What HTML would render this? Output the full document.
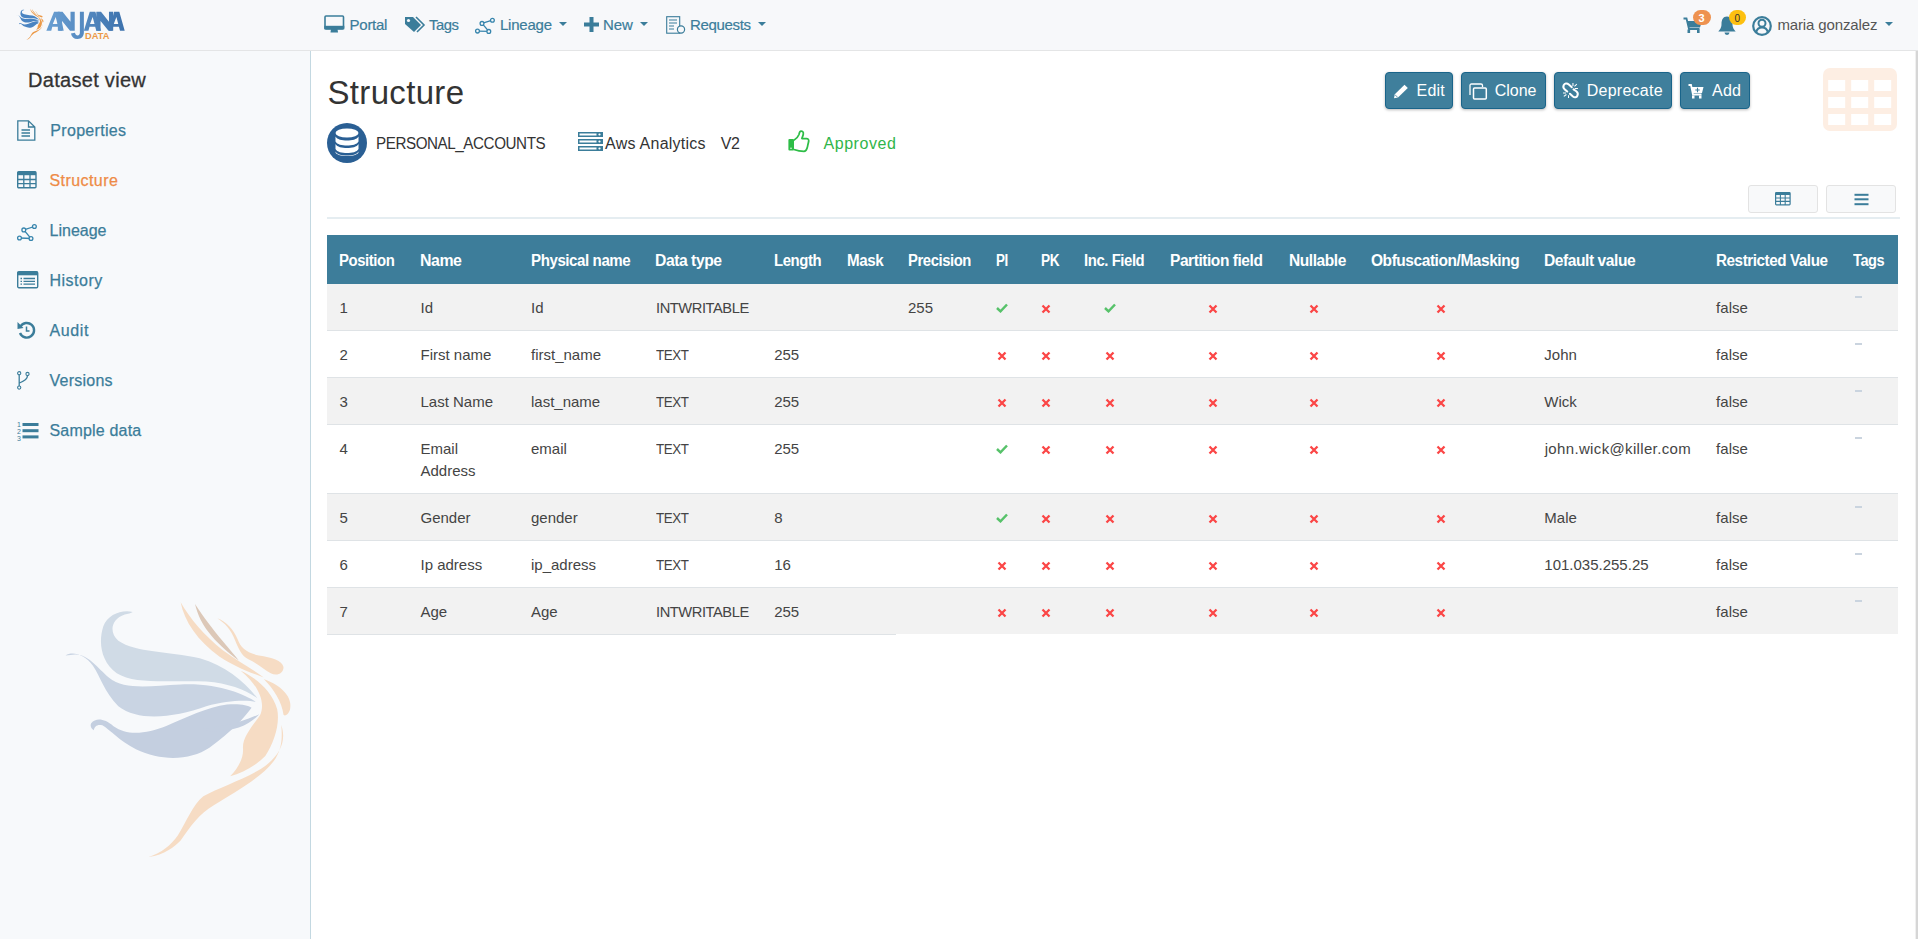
<!DOCTYPE html><html><head><meta charset="utf-8"><style>
html,body{margin:0;padding:0;width:1918px;height:939px;overflow:hidden;background:#fff;position:relative}
.t{position:absolute;white-space:nowrap;line-height:1;font-family:"Liberation Sans",sans-serif}
svg{display:block}
</style></head><body>
<div style="position:absolute;left:0;top:0;width:1918px;height:50px;background:#f7f8fa;border-bottom:1px solid #e4e5e6"></div>
<svg style="position:absolute;left:13.3px;top:5.6px" width="34.1" height="36.5" viewBox="0 0 876 939"><path d="M290 100 C255 92 212 108 198 145 C182 195 190 255 240 292 C300 330 420 312 520 318 C590 323 645 345 680 370 C640 318 580 268 500 245 C400 222 300 228 245 190 C215 165 222 122 265 108 C275 106 285 104 290 100 Z" fill="#4a84c2"/><path d="M80 236 C100 222 140 232 165 268 C190 305 200 350 245 395 C310 445 420 430 520 395 C590 375 650 375 676 382 C640 358 560 322 440 327 C340 332 265 345 215 305 C180 275 150 232 110 233 C100 234 90 236 80 236 Z" fill="#4a84c2"/><path d="M160 448 C175 432 200 432 230 458 C275 490 335 480 395 457 C455 432 525 397 585 390 C625 387 650 392 662 400 C640 430 600 475 530 525 C470 565 380 568 300 530 C250 505 220 470 195 455 C180 450 170 458 168 470 C160 465 156 455 160 448 Z" fill="#4a84c2"/><path d="M510 466 C560 460 620 450 686 420 C660 450 610 475 540 474 C525 474 515 470 510 466 Z" fill="#4a84c2"/><path d="M440 70 C452 130 492 190 562 240 C605 268 645 285 700 305 C655 272 612 250 572 220 C512 172 470 122 440 70 Z" fill="#ec9a48"/><path d="M485 75 C500 140 542 192 622 252 C592 212 540 160 485 75 Z" fill="#ec9a48"/><path d="M555 120 C585 132 605 155 618 185 C628 212 645 228 685 236 C725 242 758 252 762 272 C762 292 742 302 722 292 C702 282 682 262 652 248 C630 238 620 212 610 188 C596 152 578 136 555 120 Z" fill="#ec9a48"/><path d="M628 284 C672 304 725 344 742 404 C752 450 732 511 705 551 C672 584 632 604 595 614 C625 584 638 551 635 524 C635 490 665 457 688 424 C705 390 692 337 628 284 Z" fill="#ec9a48"/><path d="M700 310 C762 332 792 372 782 407 C777 422 767 427 762 422 C757 382 732 342 700 310 Z" fill="#ec9a48"/><path d="M755 454 C772 504 752 551 692 591 C638 624 558 651 511 677 C478 704 458 757 431 800 C410 830 380 855 340 867 C390 860 420 835 440 815 C471 771 498 731 545 704 C612 664 705 611 738 557 C758 524 758 490 755 454 Z" fill="#ec9a48"/></svg>
<svg style="position:absolute;left:40px;top:6px" width="90" height="36" viewBox="0 0 1918 767">
<defs><linearGradient id="lg" gradientUnits="userSpaceOnUse" x1="135" x2="1805" y1="0" y2="0"><stop offset="0" stop-color="#6a9fd2"/><stop offset="1" stop-color="#3d72ad"/></linearGradient></defs>
<g fill="url(#lg)">
<path d="M135 530 L300 125 L420 125 L505 530 L400 530 L385 440 L262 440 L240 530 Z M272 385 L372 385 L335 235 Z" fill-rule="evenodd"/>
<path d="M380 125 H470 V530 H380 Z M650 125 H740 V530 H650 Z M380 125 L480 125 L740 450 L740 530 L640 530 L380 210 Z"/>
<path d="M850 125 H935 V560 C935 650 880 702 800 702 C720 702 672 660 660 585 L745 570 C755 612 775 627 800 627 C835 627 850 605 850 560 Z"/>
<path d="M935 530 L1060 125 L1180 125 L1300 530 L1200 530 L1176 440 L1056 440 L1032 530 Z M1066 385 L1162 385 L1122 235 Z" fill-rule="evenodd"/>
<path d="M1200 125 H1290 V530 H1200 Z M1470 125 H1560 V530 H1470 Z M1200 125 L1300 125 L1560 450 L1560 530 L1460 530 L1200 210 Z"/>
<path d="M1470 530 L1580 125 L1690 125 L1805 530 L1705 530 L1682 440 L1560 440 L1540 530 Z M1572 385 L1668 385 L1628 235 Z" fill-rule="evenodd"/>
</g>
<text x="960" y="700" font-family="Liberation Sans" font-weight="bold" font-size="190" textLength="520" lengthAdjust="spacingAndGlyphs" fill="#ec9a48">DATA</text>
</svg>
<svg style="position:absolute;left:324px;top:15px" width="21" height="19" viewBox="0 0 21 19">
<rect x="1" y="1" width="18.5" height="13" rx="1" fill="none" stroke="#3b7d9a" stroke-width="1.6"/>
<rect x="0.3" y="10.8" width="20" height="3.5" fill="#3b7d9a"/><path d="M7 14 L13.5 14 L14 17.5 L6.5 17.5 Z" fill="#3b7d9a"/></svg>
<div class="t" style="left:349.60px;top:17px;font-size:15px;font-weight:normal;color:#3b7d9a;letter-spacing:-0.280px;-webkit-text-stroke:0.2px #3b7d9a;">Portal</div>
<svg style="position:absolute;left:404px;top:16px" width="22" height="18" viewBox="0 0 22 18">
<path d="M1 1 L9 1 L17 9 L10 16 L1 8 Z" fill="#3b7d9a"/><circle cx="4.5" cy="4.5" r="1.6" fill="#f7f8fa"/>
<path d="M12 1 L20 9 L13 16" fill="none" stroke="#3b7d9a" stroke-width="1.6"/></svg>
<div class="t" style="left:429.00px;top:17px;font-size:15px;font-weight:normal;color:#3b7d9a;letter-spacing:-0.450px;transform:scaleX(0.9885);transform-origin:0 0;-webkit-text-stroke:0.2px #3b7d9a;">Tags</div>
<svg style="position:absolute;left:470px;top:10px" width="30" height="30" viewBox="0 0 30 30">
<path d="M7.5 21.1 L18.8 21.4 L12 13.4 L22.4 10.2" fill="none" stroke="#3785ad" stroke-width="1.3"/>
<g fill="#f7f8fa" stroke="#3785ad" stroke-width="1.3"><circle cx="7.5" cy="21.1" r="1.9"/><circle cx="18.8" cy="21.4" r="1.9"/><circle cx="12" cy="13.4" r="1.9"/><circle cx="22.4" cy="10.2" r="1.9"/></g></svg>
<div class="t" style="left:500.00px;top:17px;font-size:15px;font-weight:normal;color:#3b7d9a;letter-spacing:-0.233px;-webkit-text-stroke:0.2px #3b7d9a;">Lineage</div>
<div style="position:absolute;left:559px;top:22px;width:0;height:0;border-left:4.5px solid transparent;border-right:4.5px solid transparent;border-top:4.5px solid #3b7d9a"></div>
<svg style="position:absolute;left:584px;top:17px" width="15" height="15" viewBox="0 0 15 15"><path d="M5.5 0 H9.5 V5.5 H15 V9.5 H9.5 V15 H5.5 V9.5 H0 V5.5 H5.5 Z" fill="#3b7d9a"/></svg>
<div class="t" style="left:603.00px;top:17px;font-size:15px;font-weight:normal;color:#3b7d9a;letter-spacing:-0.050px;-webkit-text-stroke:0.2px #3b7d9a;">New</div>
<div style="position:absolute;left:640px;top:22px;width:0;height:0;border-left:4.5px solid transparent;border-right:4.5px solid transparent;border-top:4.5px solid #3b7d9a"></div>
<svg style="position:absolute;left:666px;top:16px" width="20" height="18" viewBox="0 0 20 18">
<rect x="0.7" y="0.7" width="13" height="16.5" fill="none" stroke="#3b7d9a" stroke-width="1.1"/>
<path d="M3 4 H11 M3 7 H11 M3 10 H8 M3 13 H8" stroke="#3b7d9a" stroke-width="1.1"/>
<circle cx="15" cy="13.5" r="3.6" fill="#f7f8fa" stroke="#3b7d9a" stroke-width="1.2"/></svg>
<div class="t" style="left:690.00px;top:17px;font-size:15px;font-weight:normal;color:#3b7d9a;letter-spacing:-0.336px;-webkit-text-stroke:0.2px #3b7d9a;">Requests</div>
<div style="position:absolute;left:758px;top:22px;width:0;height:0;border-left:4.5px solid transparent;border-right:4.5px solid transparent;border-top:4.5px solid #3b7d9a"></div>
<svg style="position:absolute;left:1683px;top:17px" width="20" height="17" viewBox="0 0 20 17">
<path d="M0.5 1.5 H3.5 L6 12 H16.5" fill="none" stroke="#3b7d9a" stroke-width="1.8"/>
<path d="M4 4 H19 L17 10.5 H5.5 Z" fill="#3b7d9a"/><rect x="4.5" y="12.5" width="2.6" height="3.5" fill="#3b7d9a"/><rect x="14" y="12.5" width="2.6" height="3.5" fill="#3b7d9a"/></svg>
<div style="position:absolute;left:1693px;top:10px;width:18px;height:15px;border-radius:8px;background:#ee9250"></div>
<div class="t" style="left:1698.6px;top:12.5px;font-size:11px;font-weight:bold;color:#fff;line-height:11px">3</div>
<svg style="position:absolute;left:1718px;top:16px" width="18" height="19" viewBox="0 0 18 19">
<path d="M9 0.5 C5 0.5 3.5 4 3.5 8 C3.5 12 2 13.5 0.3 15.5 H17.7 C16 13.5 14.5 12 14.5 8 C14.5 4 13 0.5 9 0.5 Z" fill="#3b7d9a"/><path d="M6.5 16.5 A2.5 2.5 0 0 0 11.5 16.5 Z" fill="#3b7d9a"/></svg>
<div style="position:absolute;left:1729px;top:10px;width:17px;height:15px;border-radius:8px;background:#fdc010"></div>
<div class="t" style="left:1734.5px;top:13px;font-size:10px;color:#333;line-height:11px">0</div>
<svg style="position:absolute;left:1752px;top:15.5px" width="20" height="20" viewBox="0 0 20 20">
<circle cx="10" cy="10" r="8.8" fill="none" stroke="#3b7d9a" stroke-width="2.2"/>
<circle cx="10" cy="7.3" r="3.5" fill="none" stroke="#3b7d9a" stroke-width="2"/>
<path d="M4.2 16.2 C5 12.8 7 11.6 10 11.6 C13 11.6 15 12.8 15.8 16.2" fill="none" stroke="#3b7d9a" stroke-width="2"/></svg>
<div class="t" style="left:1777.40px;top:17px;font-size:15px;font-weight:normal;color:#555;letter-spacing:-0.131px;">maria gonzalez</div>
<div style="position:absolute;left:1885px;top:22px;width:0;height:0;border-left:4.5px solid transparent;border-right:4.5px solid transparent;border-top:4.5px solid #3b7d9a"></div>
<div style="position:absolute;left:0;top:51px;width:310px;height:888px;background:#f7f9fb;border-right:1px solid #c3d8e1"></div>
<div class="t" style="left:28.10px;top:70px;font-size:20px;font-weight:normal;color:#333;letter-spacing:0.286px;font-weight:normal;-webkit-text-stroke:0.3px #333;">Dataset view</div>
<div class="t" style="left:50.30px;top:123px;font-size:16px;font-weight:normal;color:#3b7d9a;letter-spacing:0.311px;-webkit-text-stroke:0.25px #3b7d9a;">Properties</div>
<div class="t" style="left:49.50px;top:173px;font-size:16px;font-weight:normal;color:#ee8b45;letter-spacing:0.425px;-webkit-text-stroke:0.25px #ee8b45;">Structure</div>
<div class="t" style="left:49.50px;top:223px;font-size:16px;font-weight:normal;color:#3b7d9a;letter-spacing:0.008px;-webkit-text-stroke:0.25px #3b7d9a;">Lineage</div>
<div class="t" style="left:49.50px;top:273px;font-size:16px;font-weight:normal;color:#3b7d9a;letter-spacing:0.500px;-webkit-text-stroke:0.25px #3b7d9a;">History</div>
<div class="t" style="left:49.50px;top:323px;font-size:16px;font-weight:normal;color:#3b7d9a;letter-spacing:0.613px;-webkit-text-stroke:0.25px #3b7d9a;">Audit</div>
<div class="t" style="left:49.50px;top:373px;font-size:16px;font-weight:normal;color:#3b7d9a;letter-spacing:0.236px;-webkit-text-stroke:0.25px #3b7d9a;">Versions</div>
<div class="t" style="left:49.50px;top:423px;font-size:16px;font-weight:normal;color:#3b7d9a;letter-spacing:0.185px;-webkit-text-stroke:0.25px #3b7d9a;">Sample data</div>
<svg style="position:absolute;left:17px;top:120px" width="19" height="21" viewBox="0 0 19 21">
<path d="M0.8 0.8 H11.5 L17.8 7 V20.2 H0.8 Z M11.5 0.8 V7 H17.8" fill="none" stroke="#3b7d9a" stroke-width="1.3"/>
<path d="M4.5 10 H13 M4.5 13 H13 M4.5 16 H13" stroke="#3b7d9a" stroke-width="1.3"/></svg>
<svg style="position:absolute;left:17px;top:171px" width="20" height="18" viewBox="0 0 20 18">
<rect x="0.7" y="0.7" width="18.3" height="16" rx="1" fill="none" stroke="#3b7d9a" stroke-width="1.4"/>
<rect x="0.7" y="0.7" width="18.3" height="3.5" fill="#3b7d9a"/>
<path d="M0.7 8.5 H19 M0.7 12.7 H19 M6.8 4 V17 M13 4 V17" stroke="#3b7d9a" stroke-width="1.3"/></svg>
<svg style="position:absolute;left:12px;top:215px" width="30" height="30" viewBox="0 0 30 30">
<path d="M7.5 23 L19 23.5 L11.8 14.9 L22.4 11.5" fill="none" stroke="#3785ad" stroke-width="1.3"/>
<g fill="#f7f9fb" stroke="#3785ad" stroke-width="1.3"><circle cx="7.5" cy="23" r="1.9"/><circle cx="19" cy="23.5" r="1.9"/><circle cx="11.8" cy="14.9" r="1.9"/><circle cx="22.4" cy="11.5" r="1.9"/></g></svg>
<svg style="position:absolute;left:17px;top:271px" width="22" height="18" viewBox="0 0 22 18">
<rect x="0.7" y="0.7" width="20" height="16" rx="1.2" fill="none" stroke="#3b7d9a" stroke-width="1.4"/>
<rect x="0.7" y="0.7" width="20" height="3.6" fill="#3b7d9a"/>
<path d="M3.5 7.5 H5 M3.5 10.3 H5 M3.5 13.1 H5 M6.5 7.5 H18 M6.5 10.3 H18 M6.5 13.1 H18" stroke="#3b7d9a" stroke-width="1.3"/></svg>
<svg style="position:absolute;left:17px;top:321px" width="19" height="19" viewBox="0 0 19 19">
<path d="M3.5 5.5 A7.3 7.3 0 1 1 3 12" fill="none" stroke="#3b7d9a" stroke-width="2.4"/>
<path d="M0.5 1 L6.5 7 L0.5 8 Z" fill="#3b7d9a"/><path d="M9.5 5.5 V10 H12.5" fill="none" stroke="#3b7d9a" stroke-width="1.5"/></svg>
<svg style="position:absolute;left:17px;top:371px" width="13" height="19" viewBox="0 0 13 19">
<circle cx="2.2" cy="2.2" r="1.6" fill="none" stroke="#3b7d9a" stroke-width="1.1"/><circle cx="10.5" cy="3" r="1.6" fill="none" stroke="#3b7d9a" stroke-width="1.1"/><circle cx="2.2" cy="16.6" r="1.6" fill="none" stroke="#3b7d9a" stroke-width="1.1"/>
<path d="M2.2 3.8 V15 M10.5 4.6 C10.5 8 8 10 2.5 12" fill="none" stroke="#3b7d9a" stroke-width="1.3"/></svg>
<svg style="position:absolute;left:17px;top:420px" width="22" height="21" viewBox="0 0 22 21">
<text x="0" y="6.5" font-family="Liberation Sans" font-size="7" fill="#3b7d9a">1</text><text x="0" y="13.5" font-family="Liberation Sans" font-size="7" fill="#3b7d9a">2</text><text x="0" y="20.5" font-family="Liberation Sans" font-size="7" fill="#3b7d9a">3</text>
<rect x="5.5" y="3" width="16" height="3" fill="#3b7d9a"/><rect x="5.5" y="9.2" width="16" height="3" fill="#3b7d9a"/><rect x="5.5" y="15.4" width="16" height="3" fill="#3b7d9a"/></svg>
<svg style="position:absolute;left:40px;top:580px" width="280" height="300" viewBox="0 0 876 939"><path d="M290 100 C255 92 212 108 198 145 C182 195 190 255 240 292 C300 330 420 312 520 318 C590 323 645 345 680 370 C640 318 580 268 500 245 C400 222 300 228 245 190 C215 165 222 122 265 108 C275 106 285 104 290 100 Z" fill="#d0dbe6"/><path d="M80 236 C100 222 140 232 165 268 C190 305 200 350 245 395 C310 445 420 430 520 395 C590 375 650 375 676 382 C640 358 560 322 440 327 C340 332 265 345 215 305 C180 275 150 232 110 233 C100 234 90 236 80 236 Z" fill="#c9d4e3"/><path d="M160 448 C175 432 200 432 230 458 C275 490 335 480 395 457 C455 432 525 397 585 390 C625 387 650 392 662 400 C640 430 600 475 530 525 C470 565 380 568 300 530 C250 505 220 470 195 455 C180 450 170 458 168 470 C160 465 156 455 160 448 Z" fill="#c4cfe0"/><path d="M510 466 C560 460 620 450 686 420 C660 450 610 475 540 474 C525 474 515 470 510 466 Z" fill="#c4cfe0"/><path d="M440 70 C452 130 492 190 562 240 C605 268 645 285 700 305 C655 272 612 250 572 220 C512 172 470 122 440 70 Z" fill="#f6dcc4"/><path d="M485 75 C500 140 542 192 622 252 C592 212 540 160 485 75 Z" fill="#dcc8b8"/><path d="M555 120 C585 132 605 155 618 185 C628 212 645 228 685 236 C725 242 758 252 762 272 C762 292 742 302 722 292 C702 282 682 262 652 248 C630 238 620 212 610 188 C596 152 578 136 555 120 Z" fill="#f6dcc4"/><path d="M628 284 C672 304 725 344 742 404 C752 450 732 511 705 551 C672 584 632 604 595 614 C625 584 638 551 635 524 C635 490 665 457 688 424 C705 390 692 337 628 284 Z" fill="#f6dcc4"/><path d="M700 310 C762 332 792 372 782 407 C777 422 767 427 762 422 C757 382 732 342 700 310 Z" fill="#f6dcc4"/><path d="M755 454 C772 504 752 551 692 591 C638 624 558 651 511 677 C478 704 458 757 431 800 C410 830 380 855 340 867 C390 860 420 835 440 815 C471 771 498 731 545 704 C612 664 705 611 738 557 C758 524 758 490 755 454 Z" fill="#f6dcc4"/></svg>
<div style="position:absolute;left:1916px;top:51px;width:2px;height:888px;background:#d6d6d6"></div>
<div style="position:absolute;left:1915px;top:51px;width:1px;height:888px;background:#f0f0f0"></div>
<div class="t" style="left:327.50px;top:76px;font-size:33px;font-weight:normal;color:#333;letter-spacing:0.325px;">Structure</div>
<svg style="position:absolute;left:327px;top:123px" width="40" height="40" viewBox="0 0 40 40"><circle cx="20" cy="20" r="20" fill="#2a5f94"/>
<g fill="#fff"><ellipse cx="20" cy="10" rx="11.5" ry="4.5"/>
<path d="M8.5 13.5 C10 16.5 15 17.5 20 17.5 C25 17.5 30 16.5 31.5 13.5 V18.5 C30 21.5 25 22.5 20 22.5 C15 22.5 10 21.5 8.5 18.5 Z"/>
<path d="M8.5 21 C10 24 15 25 20 25 C25 25 30 24 31.5 21 V26 C30 29 25 30 20 30 C15 30 10 29 8.5 26 Z"/>
<path d="M8.5 28.5 C10 31.5 15 32.5 20 32.5 C25 32.5 30 31.5 31.5 28.5 V29 C31.5 31.5 26 33 20 33 C14 33 8.5 31.5 8.5 29 Z"/></g></svg>
<div class="t" style="left:375.70px;top:136px;font-size:16px;font-weight:normal;color:#333;letter-spacing:-0.450px;transform:scaleX(0.9496);transform-origin:0 0;">PERSONAL_ACCOUNTS</div>
<svg style="position:absolute;left:578px;top:132px" width="25" height="20" viewBox="0 0 25 20">
<g fill="#3b7d9a"><rect x="0" y="0" width="25" height="5"/><rect x="0" y="7" width="25" height="5"/><rect x="0" y="14" width="25" height="5"/></g>
<g fill="#fff"><rect x="1.5" y="1.5" width="17" height="2"/><rect x="1.5" y="8.5" width="17" height="2"/><rect x="1.5" y="15.5" width="17" height="2"/>
<circle cx="21.5" cy="2.5" r="1.1"/><circle cx="21.5" cy="9.5" r="1.1"/><circle cx="21.5" cy="16.5" r="1.1"/></g></svg>
<div class="t" style="left:605.10px;top:136px;font-size:16px;font-weight:normal;color:#333;letter-spacing:0.250px;">Aws Analytics</div>
<div class="t" style="left:720.70px;top:136px;font-size:16px;font-weight:normal;color:#333;letter-spacing:-0.450px;">V2</div>
<svg style="position:absolute;left:787px;top:130px" width="23" height="23" viewBox="0 0 23 23">
<rect x="1.4" y="9.1" width="5.6" height="11.4" rx="1" fill="#2ebd47"/><circle cx="4" cy="18.3" r="0.75" fill="#fff"/>
<path d="M6.9 10.2 C9 9.2 11 7 12 4.5 C12.5 2.5 12.5 1 14 1 C15.5 1 16.6 2 16.3 4 C16.1 5.5 15.3 7.2 14.9 8.5 H19.5 C21 8.5 21.9 9.6 21.7 11 C21.5 12.2 21.3 13.4 20.9 14.6 C20.7 16 20.4 17.2 19.9 18.6 C19.4 20.4 18.5 21.3 17 21.3 C14 21.3 10 20.6 6.9 19.5" fill="none" stroke="#2ebd47" stroke-width="1.75" stroke-linejoin="round"/></svg>
<div class="t" style="left:823.50px;top:136px;font-size:16px;font-weight:normal;color:#2fb54a;letter-spacing:0.543px;">Approved</div>
<div style="position:absolute;left:1385px;top:72px;width:66px;height:35px;background:#3f7f9c;border:1px solid #19648a;border-radius:4px;box-shadow:0 1px 3px rgba(0,0,0,0.28)"></div>
<svg style="position:absolute;left:1393px;top:84px" width="16" height="15" viewBox="0 0 16 15"><path d="M11.5 0.8 L14.8 4 L5 13.5 L1 14.3 L1.8 10.3 Z" fill="#fff"/><path d="M1.8 10.5 L4.8 13.5" stroke="#3f7f9c" stroke-width="0.8"/></svg>
<div class="t" style="left:1416.60px;top:83px;font-size:16px;font-weight:normal;color:#fff;letter-spacing:0.150px;">Edit</div>
<div style="position:absolute;left:1461px;top:72px;width:83px;height:35px;background:#3f7f9c;border:1px solid #19648a;border-radius:4px;box-shadow:0 1px 3px rgba(0,0,0,0.28)"></div>
<svg style="position:absolute;left:1469px;top:83px" width="19" height="17" viewBox="0 0 19 17"><path d="M1 12 V2.5 C1 1.5 1.5 1 2.5 1 H12 C13 1 13.5 1.5 13.5 2.5 V4" fill="none" stroke="#fff" stroke-width="1.3"/><rect x="4.5" y="5" width="12.8" height="11" rx="1" fill="none" stroke="#fff" stroke-width="1.5"/></svg>
<div class="t" style="left:1494.70px;top:83px;font-size:16px;font-weight:normal;color:#fff;letter-spacing:-0.000px;">Clone</div>
<div style="position:absolute;left:1554px;top:72px;width:116px;height:35px;background:#3f7f9c;border:1px solid #19648a;border-radius:4px;box-shadow:0 1px 3px rgba(0,0,0,0.28)"></div>
<svg style="position:absolute;left:1558px;top:78px" width="26" height="26" viewBox="0 0 939 939"><path d="M500 330 L390 235 C320 175 240 195 205 260 C180 310 195 370 250 420 L335 490 M430 570 L540 670 C600 720 670 700 700 640 C725 590 710 520 660 480 L560 410" fill="none" stroke="#fff" stroke-width="72" stroke-linecap="round"/><path d="M540 185 V290 M595 300 L680 225 M605 380 H720 M180 540 H290 M210 665 L305 595 M380 620 V725" stroke="#fff" stroke-width="38"/></svg>
<div class="t" style="left:1586.70px;top:83px;font-size:16px;font-weight:normal;color:#fff;letter-spacing:0.262px;">Deprecate</div>
<div style="position:absolute;left:1680px;top:72px;width:68px;height:35px;background:#3f7f9c;border:1px solid #19648a;border-radius:4px;box-shadow:0 1px 3px rgba(0,0,0,0.28)"></div>
<svg style="position:absolute;left:1688px;top:84px" width="16" height="15" viewBox="0 0 16 15"><path d="M0.5 1 H3 L5 10.5 H13.5" fill="none" stroke="#fff" stroke-width="1.8"/><path d="M3.5 3 H15.5 L14 9 H5 Z" fill="#fff"/><rect x="4" y="11.5" width="2.5" height="3" fill="#fff"/><rect x="11" y="11.5" width="2.5" height="3" fill="#fff"/><path d="M9.5 3.8 V8.2 M7.3 6 H11.7" stroke="#3f7f9c" stroke-width="1.1"/></svg>
<div class="t" style="left:1712.00px;top:83px;font-size:16px;font-weight:normal;color:#fff;letter-spacing:0.275px;">Add</div>
<svg style="position:absolute;left:1823px;top:68px" width="74" height="63" viewBox="0 0 74 63"><rect x="0" y="0" width="74" height="63" rx="7" fill="#fdeee3"/>
<g fill="#fff"><rect x="5.2" y="12" width="17" height="11"/><rect x="28.2" y="12" width="17" height="11"/><rect x="51.2" y="12" width="17" height="11"/>
<rect x="5.2" y="29" width="17" height="11"/><rect x="28.2" y="29" width="17" height="11"/><rect x="51.2" y="29" width="17" height="11"/>
<rect x="5.2" y="46" width="17" height="11"/><rect x="28.2" y="46" width="17" height="11"/><rect x="51.2" y="46" width="17" height="11"/></g></svg>
<div style="position:absolute;left:1748px;top:185px;width:68px;height:26px;background:#f8f9fa;border:1px solid #e3e3e3;border-radius:3px"></div>
<div style="position:absolute;left:1826px;top:185px;width:68px;height:26px;background:#f8f9fa;border:1px solid #e3e3e3;border-radius:3px"></div>
<svg style="position:absolute;left:1775px;top:192px" width="16" height="14" viewBox="0 0 16 14"><rect x="0.6" y="0.6" width="14.5" height="12.3" rx="0.8" fill="none" stroke="#3b7d9a" stroke-width="1.2"/><rect x="0.6" y="0.6" width="14.5" height="2.4" fill="#3b7d9a"/><path d="M0.6 6 H15 M0.6 9.4 H15 M5.4 2.5 V13 M10.2 2.5 V13" stroke="#3b7d9a" stroke-width="1.1"/></svg>
<svg style="position:absolute;left:1854px;top:193px" width="15" height="13" viewBox="0 0 15 13"><rect x="0.5" y="0.8" width="14" height="2" fill="#3b7d9a"/><rect x="0.5" y="5.3" width="14" height="2" fill="#3b7d9a"/><rect x="0.5" y="10.2" width="14" height="2" fill="#3b7d9a"/></svg>
<div style="position:absolute;left:327px;top:217px;width:1573px;height:2px;background:#e5edf1"></div>
<div style="position:absolute;left:327px;top:235px;width:1571px;height:49px;background:#3d7d9a"></div>
<div class="t" style="left:339.10px;top:253px;font-size:16px;font-weight:bold;color:#fff;letter-spacing:-0.450px;transform:scaleX(0.9308);transform-origin:0 0;">Position</div>
<div class="t" style="left:420.00px;top:253px;font-size:16px;font-weight:bold;color:#fff;letter-spacing:-0.450px;transform:scaleX(0.9917);transform-origin:0 0;">Name</div>
<div class="t" style="left:531.00px;top:253px;font-size:16px;font-weight:bold;color:#fff;letter-spacing:-0.450px;transform:scaleX(0.9428);transform-origin:0 0;">Physical name</div>
<div class="t" style="left:654.80px;top:253px;font-size:16px;font-weight:bold;color:#fff;letter-spacing:-0.450px;transform:scaleX(0.9795);transform-origin:0 0;">Data type</div>
<div class="t" style="left:774.20px;top:253px;font-size:16px;font-weight:bold;color:#fff;letter-spacing:-0.450px;transform:scaleX(0.9305);transform-origin:0 0;">Length</div>
<div class="t" style="left:847.10px;top:253px;font-size:16px;font-weight:bold;color:#fff;letter-spacing:-0.450px;transform:scaleX(0.9471);transform-origin:0 0;">Mask</div>
<div class="t" style="left:908.00px;top:253px;font-size:16px;font-weight:bold;color:#fff;letter-spacing:-0.450px;transform:scaleX(0.9262);transform-origin:0 0;">Precision</div>
<div class="t" style="left:996.10px;top:253px;font-size:16px;font-weight:bold;color:#fff;letter-spacing:-0.450px;transform:scaleX(0.8328);transform-origin:0 0;">PI</div>
<div class="t" style="left:1041.20px;top:253px;font-size:16px;font-weight:bold;color:#fff;letter-spacing:-0.450px;transform:scaleX(0.8532);transform-origin:0 0;">PK</div>
<div class="t" style="left:1083.90px;top:253px;font-size:16px;font-weight:bold;color:#fff;letter-spacing:-0.450px;transform:scaleX(0.9296);transform-origin:0 0;">Inc. Field</div>
<div class="t" style="left:1170.40px;top:253px;font-size:16px;font-weight:bold;color:#fff;letter-spacing:-0.450px;transform:scaleX(0.9682);transform-origin:0 0;">Partition field</div>
<div class="t" style="left:1289.10px;top:253px;font-size:16px;font-weight:bold;color:#fff;letter-spacing:-0.450px;transform:scaleX(0.9695);transform-origin:0 0;">Nullable</div>
<div class="t" style="left:1370.80px;top:253px;font-size:16px;font-weight:bold;color:#fff;letter-spacing:-0.450px;transform:scaleX(0.9675);transform-origin:0 0;">Obfuscation/Masking</div>
<div class="t" style="left:1544.30px;top:253px;font-size:16px;font-weight:bold;color:#fff;letter-spacing:-0.450px;transform:scaleX(0.9735);transform-origin:0 0;">Default value</div>
<div class="t" style="left:1716.20px;top:253px;font-size:16px;font-weight:bold;color:#fff;letter-spacing:-0.450px;transform:scaleX(0.9512);transform-origin:0 0;">Restricted Value</div>
<div class="t" style="left:1853.00px;top:253px;font-size:16px;font-weight:bold;color:#fff;letter-spacing:-0.450px;transform:scaleX(0.9109);transform-origin:0 0;">Tags</div>
<div style="position:absolute;left:327px;top:284px;width:1571px;height:46px;background:#f2f2f2"></div>
<div style="position:absolute;left:327px;top:330px;width:1571px;height:1px;background:#dfe3e6"></div>
<div class="t" style="left:339.50px;top:300px;font-size:15px;font-weight:normal;color:#444;letter-spacing:0.000px;">1</div>
<div class="t" style="left:420.50px;top:300px;font-size:15px;font-weight:normal;color:#444;letter-spacing:0.000px;">Id</div>
<div class="t" style="left:531.00px;top:300px;font-size:15px;font-weight:normal;color:#444;letter-spacing:0.000px;">Id</div>
<div class="t" style="left:655.70px;top:300px;font-size:15px;font-weight:normal;color:#444;letter-spacing:-0.450px;transform:scaleX(0.9785);transform-origin:0 0;">INTWRITABLE</div>
<div class="t" style="left:908.00px;top:300px;font-size:15px;font-weight:normal;color:#444;letter-spacing:0.000px;">255</div>
<svg style="position:absolute;left:996px;top:303px" width="12" height="10" viewBox="0 0 12 10"><path d="M1 5 L4.5 8.3 L11 1.5" fill="none" stroke="#57c26a" stroke-width="2.5"/></svg>
<svg style="position:absolute;left:1041px;top:303.7px" width="10" height="10" viewBox="0 0 10 10"><path d="M1.5 1.5 L8.5 8.5 M8.5 1.5 L1.5 8.5" stroke="#fb4646" stroke-width="2.3"/></svg>
<svg style="position:absolute;left:1104px;top:303px" width="12" height="10" viewBox="0 0 12 10"><path d="M1 5 L4.5 8.3 L11 1.5" fill="none" stroke="#57c26a" stroke-width="2.5"/></svg>
<svg style="position:absolute;left:1208px;top:303.7px" width="10" height="10" viewBox="0 0 10 10"><path d="M1.5 1.5 L8.5 8.5 M8.5 1.5 L1.5 8.5" stroke="#fb4646" stroke-width="2.3"/></svg>
<svg style="position:absolute;left:1309px;top:303.7px" width="10" height="10" viewBox="0 0 10 10"><path d="M1.5 1.5 L8.5 8.5 M8.5 1.5 L1.5 8.5" stroke="#fb4646" stroke-width="2.3"/></svg>
<svg style="position:absolute;left:1436px;top:303.7px" width="10" height="10" viewBox="0 0 10 10"><path d="M1.5 1.5 L8.5 8.5 M8.5 1.5 L1.5 8.5" stroke="#fb4646" stroke-width="2.3"/></svg>
<div class="t" style="left:1716.10px;top:300px;font-size:15px;font-weight:normal;color:#444;letter-spacing:0.025px;">false</div>
<div style="position:absolute;left:1855px;top:296px;width:7px;height:2px;background:#cad4df"></div>
<div style="position:absolute;left:327px;top:331px;width:1571px;height:46px;background:#ffffff"></div>
<div style="position:absolute;left:327px;top:377px;width:1571px;height:1px;background:#dfe3e6"></div>
<div class="t" style="left:339.50px;top:347px;font-size:15px;font-weight:normal;color:#444;letter-spacing:0.000px;">2</div>
<div class="t" style="left:420.50px;top:347px;font-size:15px;font-weight:normal;color:#444;letter-spacing:0.000px;">First name</div>
<div class="t" style="left:531.00px;top:347px;font-size:15px;font-weight:normal;color:#444;letter-spacing:0.000px;">first_name</div>
<div class="t" style="left:655.70px;top:347px;font-size:15px;font-weight:normal;color:#444;letter-spacing:-0.450px;transform:scaleX(0.8919);transform-origin:0 0;">TEXT</div>
<div class="t" style="left:774.20px;top:347px;font-size:15px;font-weight:normal;color:#444;letter-spacing:0.000px;">255</div>
<svg style="position:absolute;left:997px;top:350.7px" width="10" height="10" viewBox="0 0 10 10"><path d="M1.5 1.5 L8.5 8.5 M8.5 1.5 L1.5 8.5" stroke="#fb4646" stroke-width="2.3"/></svg>
<svg style="position:absolute;left:1041px;top:350.7px" width="10" height="10" viewBox="0 0 10 10"><path d="M1.5 1.5 L8.5 8.5 M8.5 1.5 L1.5 8.5" stroke="#fb4646" stroke-width="2.3"/></svg>
<svg style="position:absolute;left:1105px;top:350.7px" width="10" height="10" viewBox="0 0 10 10"><path d="M1.5 1.5 L8.5 8.5 M8.5 1.5 L1.5 8.5" stroke="#fb4646" stroke-width="2.3"/></svg>
<svg style="position:absolute;left:1208px;top:350.7px" width="10" height="10" viewBox="0 0 10 10"><path d="M1.5 1.5 L8.5 8.5 M8.5 1.5 L1.5 8.5" stroke="#fb4646" stroke-width="2.3"/></svg>
<svg style="position:absolute;left:1309px;top:350.7px" width="10" height="10" viewBox="0 0 10 10"><path d="M1.5 1.5 L8.5 8.5 M8.5 1.5 L1.5 8.5" stroke="#fb4646" stroke-width="2.3"/></svg>
<svg style="position:absolute;left:1436px;top:350.7px" width="10" height="10" viewBox="0 0 10 10"><path d="M1.5 1.5 L8.5 8.5 M8.5 1.5 L1.5 8.5" stroke="#fb4646" stroke-width="2.3"/></svg>
<div class="t" style="left:1544.30px;top:347px;font-size:15px;font-weight:normal;color:#444;letter-spacing:0.000px;">John</div>
<div class="t" style="left:1716.10px;top:347px;font-size:15px;font-weight:normal;color:#444;letter-spacing:0.025px;">false</div>
<div style="position:absolute;left:1855px;top:343px;width:7px;height:2px;background:#cad4df"></div>
<div style="position:absolute;left:327px;top:378px;width:1571px;height:46px;background:#f2f2f2"></div>
<div style="position:absolute;left:327px;top:424px;width:1571px;height:1px;background:#dfe3e6"></div>
<div class="t" style="left:339.50px;top:394px;font-size:15px;font-weight:normal;color:#444;letter-spacing:0.000px;">3</div>
<div class="t" style="left:420.50px;top:394px;font-size:15px;font-weight:normal;color:#444;letter-spacing:0.000px;">Last Name</div>
<div class="t" style="left:531.00px;top:394px;font-size:15px;font-weight:normal;color:#444;letter-spacing:0.000px;">last_name</div>
<div class="t" style="left:655.70px;top:394px;font-size:15px;font-weight:normal;color:#444;letter-spacing:-0.450px;transform:scaleX(0.8919);transform-origin:0 0;">TEXT</div>
<div class="t" style="left:774.20px;top:394px;font-size:15px;font-weight:normal;color:#444;letter-spacing:0.000px;">255</div>
<svg style="position:absolute;left:997px;top:397.7px" width="10" height="10" viewBox="0 0 10 10"><path d="M1.5 1.5 L8.5 8.5 M8.5 1.5 L1.5 8.5" stroke="#fb4646" stroke-width="2.3"/></svg>
<svg style="position:absolute;left:1041px;top:397.7px" width="10" height="10" viewBox="0 0 10 10"><path d="M1.5 1.5 L8.5 8.5 M8.5 1.5 L1.5 8.5" stroke="#fb4646" stroke-width="2.3"/></svg>
<svg style="position:absolute;left:1105px;top:397.7px" width="10" height="10" viewBox="0 0 10 10"><path d="M1.5 1.5 L8.5 8.5 M8.5 1.5 L1.5 8.5" stroke="#fb4646" stroke-width="2.3"/></svg>
<svg style="position:absolute;left:1208px;top:397.7px" width="10" height="10" viewBox="0 0 10 10"><path d="M1.5 1.5 L8.5 8.5 M8.5 1.5 L1.5 8.5" stroke="#fb4646" stroke-width="2.3"/></svg>
<svg style="position:absolute;left:1309px;top:397.7px" width="10" height="10" viewBox="0 0 10 10"><path d="M1.5 1.5 L8.5 8.5 M8.5 1.5 L1.5 8.5" stroke="#fb4646" stroke-width="2.3"/></svg>
<svg style="position:absolute;left:1436px;top:397.7px" width="10" height="10" viewBox="0 0 10 10"><path d="M1.5 1.5 L8.5 8.5 M8.5 1.5 L1.5 8.5" stroke="#fb4646" stroke-width="2.3"/></svg>
<div class="t" style="left:1544.30px;top:394px;font-size:15px;font-weight:normal;color:#444;letter-spacing:0.000px;">Wick</div>
<div class="t" style="left:1716.10px;top:394px;font-size:15px;font-weight:normal;color:#444;letter-spacing:0.025px;">false</div>
<div style="position:absolute;left:1855px;top:390px;width:7px;height:2px;background:#cad4df"></div>
<div style="position:absolute;left:327px;top:425px;width:1571px;height:68px;background:#ffffff"></div>
<div style="position:absolute;left:327px;top:493px;width:1571px;height:1px;background:#dfe3e6"></div>
<div class="t" style="left:339.50px;top:441px;font-size:15px;font-weight:normal;color:#444;letter-spacing:0.000px;">4</div>
<div class="t" style="left:420.50px;top:441px;font-size:15px;font-weight:normal;color:#444;letter-spacing:0.000px;">Email</div>
<div class="t" style="left:420.50px;top:463px;font-size:15px;font-weight:normal;color:#444;letter-spacing:0.000px;">Address</div>
<div class="t" style="left:531.00px;top:441px;font-size:15px;font-weight:normal;color:#444;letter-spacing:0.000px;">email</div>
<div class="t" style="left:655.70px;top:441px;font-size:15px;font-weight:normal;color:#444;letter-spacing:-0.450px;transform:scaleX(0.8919);transform-origin:0 0;">TEXT</div>
<div class="t" style="left:774.20px;top:441px;font-size:15px;font-weight:normal;color:#444;letter-spacing:0.000px;">255</div>
<svg style="position:absolute;left:996px;top:444px" width="12" height="10" viewBox="0 0 12 10"><path d="M1 5 L4.5 8.3 L11 1.5" fill="none" stroke="#57c26a" stroke-width="2.5"/></svg>
<svg style="position:absolute;left:1041px;top:444.7px" width="10" height="10" viewBox="0 0 10 10"><path d="M1.5 1.5 L8.5 8.5 M8.5 1.5 L1.5 8.5" stroke="#fb4646" stroke-width="2.3"/></svg>
<svg style="position:absolute;left:1105px;top:444.7px" width="10" height="10" viewBox="0 0 10 10"><path d="M1.5 1.5 L8.5 8.5 M8.5 1.5 L1.5 8.5" stroke="#fb4646" stroke-width="2.3"/></svg>
<svg style="position:absolute;left:1208px;top:444.7px" width="10" height="10" viewBox="0 0 10 10"><path d="M1.5 1.5 L8.5 8.5 M8.5 1.5 L1.5 8.5" stroke="#fb4646" stroke-width="2.3"/></svg>
<svg style="position:absolute;left:1309px;top:444.7px" width="10" height="10" viewBox="0 0 10 10"><path d="M1.5 1.5 L8.5 8.5 M8.5 1.5 L1.5 8.5" stroke="#fb4646" stroke-width="2.3"/></svg>
<svg style="position:absolute;left:1436px;top:444.7px" width="10" height="10" viewBox="0 0 10 10"><path d="M1.5 1.5 L8.5 8.5 M8.5 1.5 L1.5 8.5" stroke="#fb4646" stroke-width="2.3"/></svg>
<div class="t" style="left:1544.70px;top:441px;font-size:15px;font-weight:normal;color:#444;letter-spacing:0.345px;">john.wick@killer.com</div>
<div class="t" style="left:1716.10px;top:441px;font-size:15px;font-weight:normal;color:#444;letter-spacing:0.025px;">false</div>
<div style="position:absolute;left:1855px;top:437px;width:7px;height:2px;background:#cad4df"></div>
<div style="position:absolute;left:327px;top:494px;width:1571px;height:46px;background:#f2f2f2"></div>
<div style="position:absolute;left:327px;top:540px;width:1571px;height:1px;background:#dfe3e6"></div>
<div class="t" style="left:339.50px;top:510px;font-size:15px;font-weight:normal;color:#444;letter-spacing:0.000px;">5</div>
<div class="t" style="left:420.50px;top:510px;font-size:15px;font-weight:normal;color:#444;letter-spacing:0.000px;">Gender</div>
<div class="t" style="left:531.00px;top:510px;font-size:15px;font-weight:normal;color:#444;letter-spacing:0.000px;">gender</div>
<div class="t" style="left:655.70px;top:510px;font-size:15px;font-weight:normal;color:#444;letter-spacing:-0.450px;transform:scaleX(0.8919);transform-origin:0 0;">TEXT</div>
<div class="t" style="left:774.20px;top:510px;font-size:15px;font-weight:normal;color:#444;letter-spacing:0.000px;">8</div>
<svg style="position:absolute;left:996px;top:513px" width="12" height="10" viewBox="0 0 12 10"><path d="M1 5 L4.5 8.3 L11 1.5" fill="none" stroke="#57c26a" stroke-width="2.5"/></svg>
<svg style="position:absolute;left:1041px;top:513.7px" width="10" height="10" viewBox="0 0 10 10"><path d="M1.5 1.5 L8.5 8.5 M8.5 1.5 L1.5 8.5" stroke="#fb4646" stroke-width="2.3"/></svg>
<svg style="position:absolute;left:1105px;top:513.7px" width="10" height="10" viewBox="0 0 10 10"><path d="M1.5 1.5 L8.5 8.5 M8.5 1.5 L1.5 8.5" stroke="#fb4646" stroke-width="2.3"/></svg>
<svg style="position:absolute;left:1208px;top:513.7px" width="10" height="10" viewBox="0 0 10 10"><path d="M1.5 1.5 L8.5 8.5 M8.5 1.5 L1.5 8.5" stroke="#fb4646" stroke-width="2.3"/></svg>
<svg style="position:absolute;left:1309px;top:513.7px" width="10" height="10" viewBox="0 0 10 10"><path d="M1.5 1.5 L8.5 8.5 M8.5 1.5 L1.5 8.5" stroke="#fb4646" stroke-width="2.3"/></svg>
<svg style="position:absolute;left:1436px;top:513.7px" width="10" height="10" viewBox="0 0 10 10"><path d="M1.5 1.5 L8.5 8.5 M8.5 1.5 L1.5 8.5" stroke="#fb4646" stroke-width="2.3"/></svg>
<div class="t" style="left:1544.30px;top:510px;font-size:15px;font-weight:normal;color:#444;letter-spacing:0.000px;">Male</div>
<div class="t" style="left:1716.10px;top:510px;font-size:15px;font-weight:normal;color:#444;letter-spacing:0.025px;">false</div>
<div style="position:absolute;left:1855px;top:506px;width:7px;height:2px;background:#cad4df"></div>
<div style="position:absolute;left:327px;top:541px;width:1571px;height:46px;background:#ffffff"></div>
<div style="position:absolute;left:327px;top:587px;width:1571px;height:1px;background:#dfe3e6"></div>
<div class="t" style="left:339.50px;top:557px;font-size:15px;font-weight:normal;color:#444;letter-spacing:0.000px;">6</div>
<div class="t" style="left:420.50px;top:557px;font-size:15px;font-weight:normal;color:#444;letter-spacing:0.000px;">Ip adress</div>
<div class="t" style="left:531.00px;top:557px;font-size:15px;font-weight:normal;color:#444;letter-spacing:0.000px;">ip_adress</div>
<div class="t" style="left:655.70px;top:557px;font-size:15px;font-weight:normal;color:#444;letter-spacing:-0.450px;transform:scaleX(0.8919);transform-origin:0 0;">TEXT</div>
<div class="t" style="left:774.20px;top:557px;font-size:15px;font-weight:normal;color:#444;letter-spacing:0.000px;">16</div>
<svg style="position:absolute;left:997px;top:560.7px" width="10" height="10" viewBox="0 0 10 10"><path d="M1.5 1.5 L8.5 8.5 M8.5 1.5 L1.5 8.5" stroke="#fb4646" stroke-width="2.3"/></svg>
<svg style="position:absolute;left:1041px;top:560.7px" width="10" height="10" viewBox="0 0 10 10"><path d="M1.5 1.5 L8.5 8.5 M8.5 1.5 L1.5 8.5" stroke="#fb4646" stroke-width="2.3"/></svg>
<svg style="position:absolute;left:1105px;top:560.7px" width="10" height="10" viewBox="0 0 10 10"><path d="M1.5 1.5 L8.5 8.5 M8.5 1.5 L1.5 8.5" stroke="#fb4646" stroke-width="2.3"/></svg>
<svg style="position:absolute;left:1208px;top:560.7px" width="10" height="10" viewBox="0 0 10 10"><path d="M1.5 1.5 L8.5 8.5 M8.5 1.5 L1.5 8.5" stroke="#fb4646" stroke-width="2.3"/></svg>
<svg style="position:absolute;left:1309px;top:560.7px" width="10" height="10" viewBox="0 0 10 10"><path d="M1.5 1.5 L8.5 8.5 M8.5 1.5 L1.5 8.5" stroke="#fb4646" stroke-width="2.3"/></svg>
<svg style="position:absolute;left:1436px;top:560.7px" width="10" height="10" viewBox="0 0 10 10"><path d="M1.5 1.5 L8.5 8.5 M8.5 1.5 L1.5 8.5" stroke="#fb4646" stroke-width="2.3"/></svg>
<div class="t" style="left:1544.30px;top:557px;font-size:15px;font-weight:normal;color:#444;letter-spacing:0.000px;">101.035.255.25</div>
<div class="t" style="left:1716.10px;top:557px;font-size:15px;font-weight:normal;color:#444;letter-spacing:0.025px;">false</div>
<div style="position:absolute;left:1855px;top:553px;width:7px;height:2px;background:#cad4df"></div>
<div style="position:absolute;left:327px;top:588px;width:1571px;height:46px;background:#f2f2f2"></div>
<div style="position:absolute;left:327px;top:634px;width:569px;height:1px;background:#dfe3e6"></div>
<div class="t" style="left:339.50px;top:604px;font-size:15px;font-weight:normal;color:#444;letter-spacing:0.000px;">7</div>
<div class="t" style="left:420.50px;top:604px;font-size:15px;font-weight:normal;color:#444;letter-spacing:0.000px;">Age</div>
<div class="t" style="left:531.00px;top:604px;font-size:15px;font-weight:normal;color:#444;letter-spacing:0.000px;">Age</div>
<div class="t" style="left:655.70px;top:604px;font-size:15px;font-weight:normal;color:#444;letter-spacing:-0.450px;transform:scaleX(0.9785);transform-origin:0 0;">INTWRITABLE</div>
<div class="t" style="left:774.20px;top:604px;font-size:15px;font-weight:normal;color:#444;letter-spacing:0.000px;">255</div>
<svg style="position:absolute;left:997px;top:607.7px" width="10" height="10" viewBox="0 0 10 10"><path d="M1.5 1.5 L8.5 8.5 M8.5 1.5 L1.5 8.5" stroke="#fb4646" stroke-width="2.3"/></svg>
<svg style="position:absolute;left:1041px;top:607.7px" width="10" height="10" viewBox="0 0 10 10"><path d="M1.5 1.5 L8.5 8.5 M8.5 1.5 L1.5 8.5" stroke="#fb4646" stroke-width="2.3"/></svg>
<svg style="position:absolute;left:1105px;top:607.7px" width="10" height="10" viewBox="0 0 10 10"><path d="M1.5 1.5 L8.5 8.5 M8.5 1.5 L1.5 8.5" stroke="#fb4646" stroke-width="2.3"/></svg>
<svg style="position:absolute;left:1208px;top:607.7px" width="10" height="10" viewBox="0 0 10 10"><path d="M1.5 1.5 L8.5 8.5 M8.5 1.5 L1.5 8.5" stroke="#fb4646" stroke-width="2.3"/></svg>
<svg style="position:absolute;left:1309px;top:607.7px" width="10" height="10" viewBox="0 0 10 10"><path d="M1.5 1.5 L8.5 8.5 M8.5 1.5 L1.5 8.5" stroke="#fb4646" stroke-width="2.3"/></svg>
<svg style="position:absolute;left:1436px;top:607.7px" width="10" height="10" viewBox="0 0 10 10"><path d="M1.5 1.5 L8.5 8.5 M8.5 1.5 L1.5 8.5" stroke="#fb4646" stroke-width="2.3"/></svg>
<div class="t" style="left:1716.10px;top:604px;font-size:15px;font-weight:normal;color:#444;letter-spacing:0.025px;">false</div>
<div style="position:absolute;left:1855px;top:600px;width:7px;height:2px;background:#cad4df"></div>
</body></html>
